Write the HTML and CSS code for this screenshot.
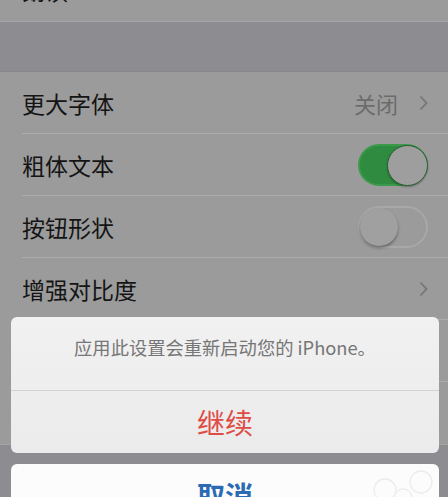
FILE: index.html
```html
<html>
<head>
<meta charset="UTF-8">
<meta name="viewport" content="width=device-width, initial-scale=1.0">
<link rel="stylesheet" href="styles.css">
</head>
<body>
<div class="screen">
    <ul class="group first">
        <li class="row"><span class="label">朗读</span></li>
    </ul>
    <div class="gap"></div>
    <ul class="group">
        <li class="row">
            <span class="label">更大字体</span>
            <span class="value">关闭</span>
            <svg class="chev" width="9" height="16" viewBox="0 0 9 16"><polyline points="1.5,1.5 7.5,8 1.5,14.5" fill="none" stroke="#767676" stroke-width="1.8"/></svg>
        </li>
        <li class="row">
            <span class="label">粗体文本</span>
            <span class="toggle on"><span class="knob"></span></span>
        </li>
        <li class="row">
            <span class="label">按钮形状</span>
            <span class="toggle"><span class="knob"></span></span>
        </li>
        <li class="row">
            <span class="label">增强对比度</span>
            <svg class="chev" width="9" height="16" viewBox="0 0 9 16"><polyline points="1.5,1.5 7.5,8 1.5,14.5" fill="none" stroke="#767676" stroke-width="1.8"/></svg>
        </li>
        <!-- rows under the sheet -->
        <li class="row">
            <span class="label"></span>
            <svg class="chev" width="9" height="16" viewBox="0 0 9 16"><polyline points="1.5,1.5 7.5,8 1.5,14.5" fill="none" stroke="#767676" stroke-width="1.8"/></svg>
        </li>
        <li class="row last">
            <span class="label"></span>
            <span class="toggle"><span class="knob"></span></span>
        </li>
    </ul>
    <div class="gap"></div>

    <!-- action sheet -->
    <div class="sheet">
        <div class="sheet-group">
            <div class="sheet-msg">应用此设置会重新启动您的 iPhone。</div>
            <div class="sheet-btn danger">继续</div>
        </div>
        <div class="sheet-group cancel">
            <div class="sheet-btn bold">取消</div>
            <svg class="mark" width="70" height="40" viewBox="0 0 70 40">
                <circle cx="16" cy="22" r="11" fill="none" stroke="#ececec" stroke-width="1.3"/>
                <circle cx="34" cy="30" r="9" fill="none" stroke="#ececec" stroke-width="1.3"/>
                <circle cx="52" cy="14" r="11" fill="none" stroke="#ececec" stroke-width="1.3"/>
            </svg>
        </div>
    </div>
</div>
</body>
</html>
```

FILE: styles.css
```css
*{ margin: 0; padding: 0; }
body { background: #8d8d91; font-family: "Noto Sans CJK SC", "Noto Sans", sans-serif; }
.screen { position: relative; width: 448px; height: 497px; overflow: hidden; }

.group { list-style: none; background: #9b9b9b; border-top: 1px solid #878789; border-bottom: 1px solid #a6a6a6; }
.group.first { margin-top: -41px; border-top: none; }
.gap { height: 49px; }

.row { height: 62px; display: flex; align-items: center; margin-left: 22px; padding-right: 20px; border-bottom: 1px solid #acacac; box-sizing: border-box; }
.row.last, .group.first .row { border-bottom: none; }
.label { flex: 1; font-size: 23px; color: #141414; }
.value { font-size: 22px; color: #6c6c6c; margin-right: 21px; }
.chev { display: block; }

.toggle { position: relative; width: 70px; height: 42px; border-radius: 21px; box-sizing: border-box; border: 2px solid #a8a8a8; background: #9b9b9b; }
.toggle .knob { position: absolute; left: 0; top: 0; width: 38px; height: 38px; border-radius: 50%; background: #a0a0a0; box-shadow: 0 2px 3px rgba(0,0,0,0.35); }
.toggle.on { background: #2f8b40; border-color: #3a9a4a; }
.toggle.on .knob { left: 27px; top: -1px; width: 39px; height: 39px; border: 1px solid #2a5f33; box-shadow: 0 1px 2px rgba(0,0,0,0.3); background: #9e9e9e; }

.sheet { position: absolute; left: 11px; top: 317px; width: 428px; }
.sheet-group { background: linear-gradient(#f1f1f1, #ebebeb); border-radius: 6px; overflow: hidden; }
.sheet-msg { height: 74px; box-sizing: border-box; padding-top: 17px; text-align: center; font-size: 18.3px; color: #767676; border-bottom: 1px solid #d2d2d2; }
.sheet-btn { height: 62px; display: flex; align-items: center; justify-content: center; font-size: 28px; }
.sheet-btn.danger { color: #de4c44; }
.sheet-group.cancel { position: relative; margin-top: 11px; background: #fcfcfc; }
.sheet-btn.bold { color: #2a6bb3; font-weight: bold; }
.mark { position: absolute; right: 0; top: 4px; }
```
